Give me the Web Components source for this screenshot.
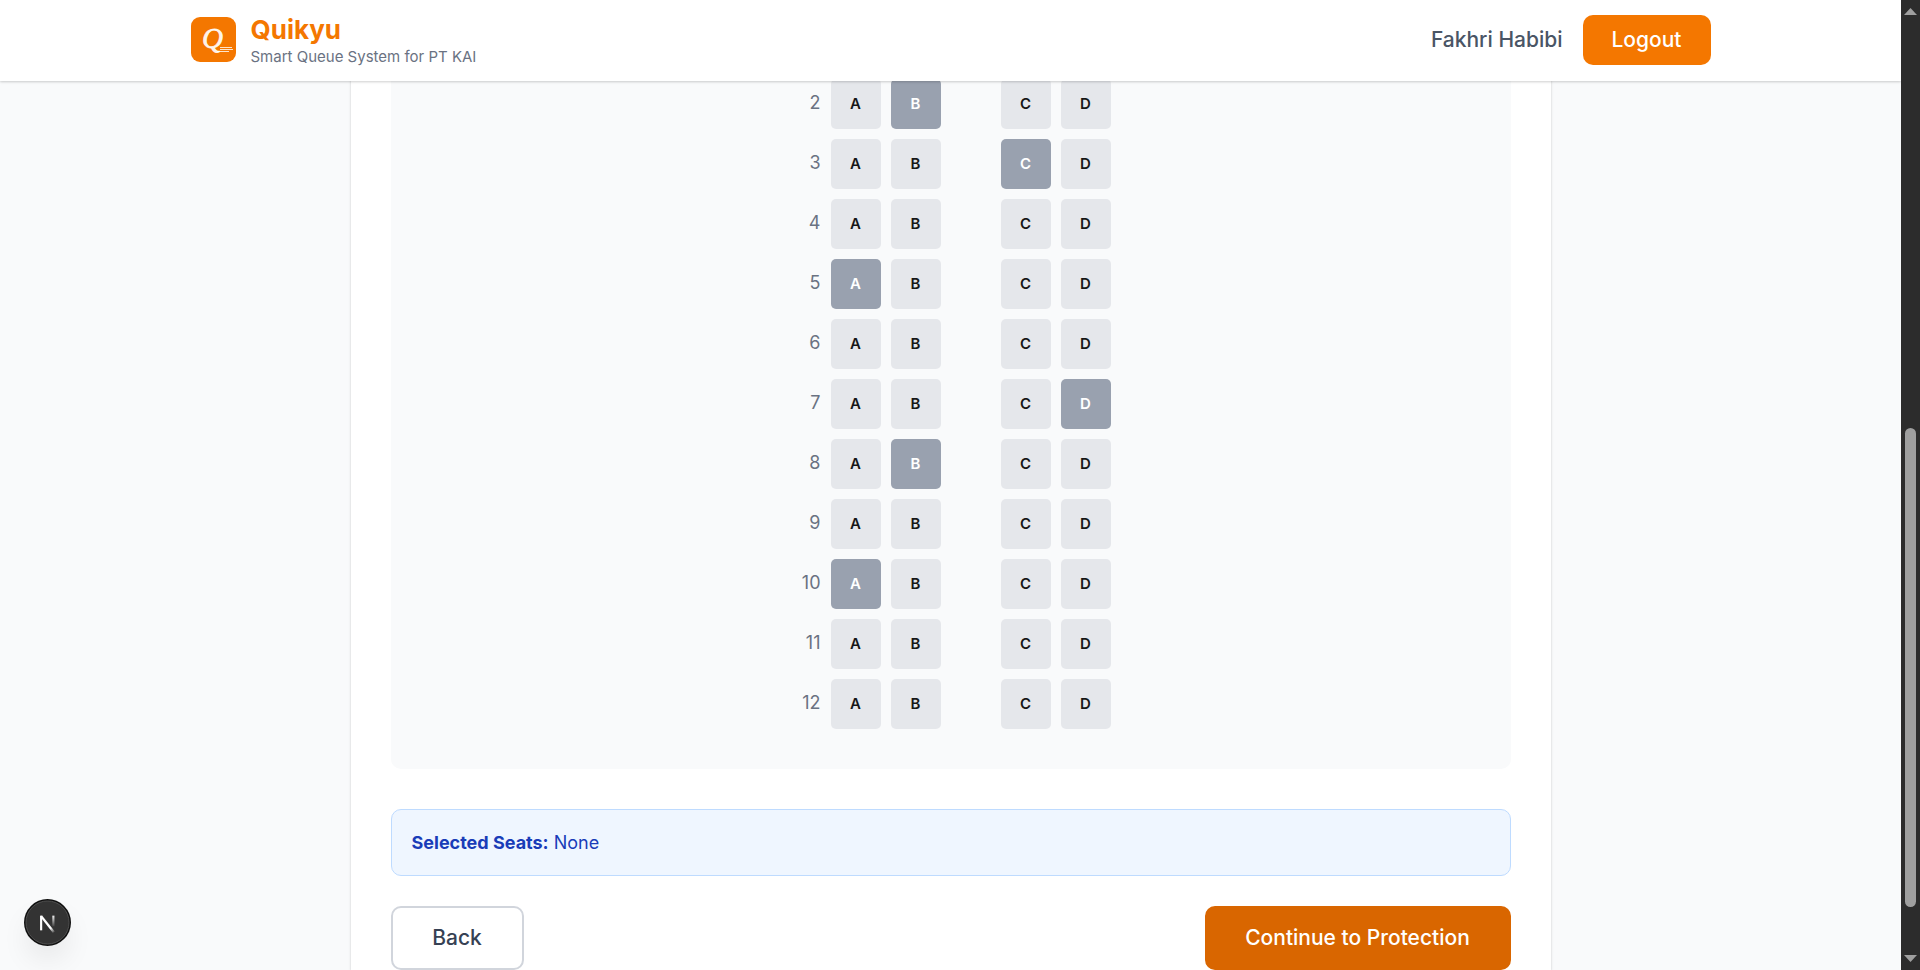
<!DOCTYPE html>
<html lang="en">
<head>
<meta charset="utf-8">
<title>Quikyu</title>
<style>
body { margin: 0; background: #f9fafb; color: #171717; font-family: Inter, "Open Sans", sans-serif; font-size: 18px; }
strong { font-weight: 700; }
</style>
</head>
<body>
<app-shell>
  <app-header slot="header"></app-header>
  <booking-card>
    <seat-map></seat-map>
    <selected-seats><strong>Selected Seats:</strong> None</selected-seats>
    <action-button slot="back" variant="outline">Back</action-button>
    <action-button slot="next" variant="primary">Continue to Protection</action-button>
  </booking-card>
</app-shell>
<script>
const define = (name, html, setup) => customElements.define(name, class extends HTMLElement {
  connectedCallback() {
    if (this.shadowRoot) return;
    this.attachShadow({ mode: 'open' }).innerHTML = html;
    if (setup) setup(this, this.shadowRoot);
  }
});

define('app-shell', `
<style>
:host { display: flex; min-height: 100vh; }
.page { flex: 1; min-width: 0; display: flex; flex-direction: column; }
main { flex: 1; display: flex; justify-content: center; }
::slotted(booking-card) { flex: 0 1 1200px; }
dev-badge { position: fixed; left: 24px; bottom: 24px; z-index: 3; }
</style>
<div class="page"><slot name="header"></slot><main><slot></slot></main></div>
<scroll-track></scroll-track>
<dev-badge></dev-badge>`);

define('app-header', `
<style>
:host { display: block; position: sticky; top: 0; z-index: 2; background: #fff; margin-bottom: -2px; box-shadow: 0 1px 3px rgba(0,0,0,.1), 0 1px 2px rgba(0,0,0,.1); }
header { box-sizing: border-box; height: 81px; padding-bottom: 2px; max-width: 1520px; margin: 0 auto; display: flex; align-items: center; justify-content: space-between; }
.brand { display: flex; align-items: center; gap: 15px; }
.words { padding-top: 5px; }
.name { font-size: 26px; font-weight: 700; line-height: 30px; color: #f47700; margin: 0; }
.tag { font-size: 15px; line-height: 24px; color: #6a7282; margin: 0; }
.user { display: flex; align-items: center; gap: 20px; font-size: 21px; font-weight: 500; color: #4a5565; }
</style>
<header>
  <div class="brand"><brand-logo></brand-logo><div class="words"><h1 class="name">Quikyu</h1><p class="tag">Smart Queue System for PT KAI</p></div></div>
  <div class="user"><span>Fakhri Habibi</span><action-button variant="small">Logout</action-button></div>
</header>`);

define('brand-logo', `
<style>:host { display: block; } svg { display: block; }</style>
<svg width="45" height="45" viewBox="0 0 45 45" aria-hidden="true">
  <rect width="45" height="45" rx="9" fill="#f47700"/>
  <text x="11" y="31" font-family="Liberation Serif, serif" font-style="italic" font-size="29" fill="#fff" fill-opacity=".92" stroke="#fff" stroke-opacity=".8" stroke-width=".8">Q</text>
  <path d="M29 30.500h12M29 32.500h13M26 34.500h12" stroke="#fff" stroke-opacity=".8" fill="none"/>
</svg>`);

define('action-button', `
<style>
:host { display: block; }
button { box-sizing: border-box; display: block; font: inherit; font-size: 21px; font-weight: 500; line-height: 30px; padding: 15px 38px; border: 2px solid transparent; border-radius: 10px; white-space: nowrap; cursor: pointer; }
:host([variant=outline]) button { min-width: 133px; background: #fff; border-color: #d1d5dc; color: #364153; }
:host([variant=primary]) button { min-width: 306px; background: #d96600; border-color: #d96600; color: #fff; }
:host([variant=small]) button { min-width: 128px; background: #f47700; border: 0; padding: 10px 28px; color: #fff; }
</style>
<button type="button"><slot></slot></button>`);

define('booking-card', `
<style>
:host { display: block; box-sizing: border-box; background: #fff; padding: 0 40px; box-shadow: 0 1px 3px rgba(0,0,0,.1), 0 1px 2px rgba(0,0,0,.1); }
.actions { display: flex; justify-content: space-between; margin-top: 30px; }
</style>
<slot></slot>
<div class="actions"><slot name="back"></slot><slot name="next"></slot></div>`);

define('seat-map', `
<style>
:host { display: flex; flex-direction: column; align-items: center; gap: 10px; padding-bottom: 40px; margin-bottom: 40px; background: #f9fafb; border-radius: 0 0 10px 10px; }
</style>`, (host, root) => {
  const taken = { 2: 'B', 3: 'C', 5: 'A', 7: 'D', 8: 'B', 10: 'A' };
  for (let n = 2; n <= 12; n++) {
    const row = document.createElement('seat-row');
    row.setAttribute('number', n);
    row.setAttribute('taken', taken[n] || '');
    root.append(row);
  }
});

define('seat-row', `
<style>
:host { display: grid; grid-template-columns: 30px 50px 50px 40px 50px 50px; gap: 10px; align-items: center; }
.n { text-align: right; color: #6a7282; line-height: 24px; padding-bottom: 2px; }
button { font: inherit; font-size: 15px; font-weight: 600; height: 50px; padding: 0 0 2px; border: 0; border-radius: 5px; background: #e5e7eb; color: #171717; }
button:disabled { background: #99a1af; color: #fff; }
</style>`, (host, root) => {
  const n = host.getAttribute('number'), taken = host.getAttribute('taken');
  const seat = l => `<button type="button" aria-label="${n}${l}"${taken === l ? ' disabled' : ''}>${l}</button>`;
  root.innerHTML += `<span class="n">${n}</span>${seat('A')}${seat('B')}<span></span>${seat('C')}${seat('D')}`;
});

define('selected-seats', `
<style>:host { display: block; padding: 20px; line-height: 25px; border: 1px solid #bedbff; border-radius: 10px; background: #eff6ff; color: #193cb8; }</style>
<slot></slot>`);

define('scroll-track', `
<style>
:host { box-sizing: border-box; flex: 0 0 19px; height: 100vh; position: sticky; top: 0; background: #2c2c2c; display: flex; flex-direction: column; align-items: center; padding: 8px 0; z-index: 3; }
.thumb { width: 11px; flex: 479; border-radius: 6px; background: #9f9f9f; }
.before { flex: 413; } .after { flex: 48; }
svg { display: block; }
</style>
<svg width="13" height="7"><path d="M0 7L6.500 0L13 7z" fill="#9f9f9f"/></svg>
<div class="before"></div><div class="thumb"></div><div class="after"></div>
<svg width="13" height="7"><path d="M0 0L6.500 7L13 0z" fill="#9f9f9f"/></svg>`);

define('dev-badge', `
<style>
:host { display: block; }
button { display: block; width: 47px; height: 47px; padding: 0; border: 0; border-radius: 50%; background: none; box-shadow: 0 16px 32px -8px rgba(0,0,0,.14); }
svg { display: block; }
</style>
<button type="button" aria-label="Open Next.js Dev Tools">
<svg width="47" height="47" viewBox="0 0 48 48" fill="none">
  <defs><linearGradient id="d" x1="28" y1="29" x2="32" y2="34" gradientUnits="userSpaceOnUse"><stop stop-color="#fff"/><stop offset="1" stop-color="#fff" stop-opacity="0"/></linearGradient>
  <linearGradient id="v" x1="0" y1="16" x2="0" y2="29" gradientUnits="userSpaceOnUse"><stop stop-color="#fff"/><stop offset="1" stop-color="#fff" stop-opacity="0"/></linearGradient></defs>
  <circle cx="24" cy="24" r="24" fill="#111"/><circle cx="24" cy="24" r="22" fill="#333" stroke="#505050"/>
  <path d="M17.500 32V17" stroke="#fff" stroke-width="2.200"/>
  <path d="M17.500 17.500L30.500 34" stroke="url(#d)" stroke-width="2.400"/>
  <path d="M30 17v11" stroke="url(#v)" stroke-width="2.200"/>
</svg></button>`);
</script>
</body>
</html>
